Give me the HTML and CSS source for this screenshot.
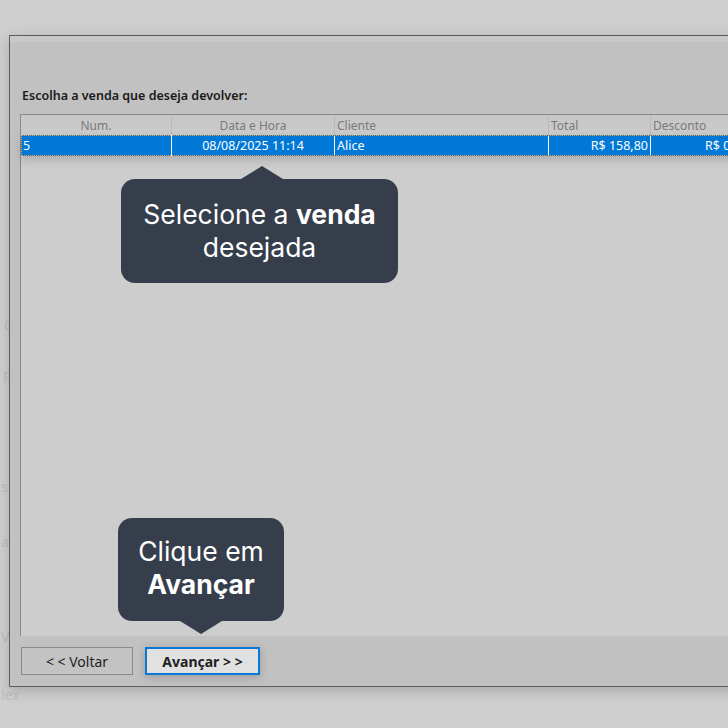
FILE: index.html
```html
<!DOCTYPE html>
<html lang="pt-BR">
<head>
    <meta charset="UTF-8">
    <meta name="viewport" content="width=device-width, initial-scale=1.0">
    <title>Devolução de venda</title>
    <link rel="stylesheet" href="styles.css">
</head>
<body>
    <div class="backdrop">
        <span class="bg-label bg-c">C</span>
        <span class="bg-label bg-p">P</span>
        <span class="bg-label bg-s">s</span>
        <span class="bg-label bg-sa">a</span>
        <span class="bg-label bg-ve">V</span>
        <span class="bg-label bg-lex">lex</span>
    </div>

    <div class="dialog">
        <div class="dialog-top"></div>
        <div class="dialog-body">
            <p class="prompt">Escolha a venda que deseja devolver:</p>
            <div class="grid">
                <div class="grid-head">
                    <div class="cell col-num center">Num.</div>
                    <div class="cell col-date center">Data e Hora</div>
                    <div class="cell col-client">Cliente</div>
                    <div class="cell col-total">Total</div>
                    <div class="cell col-disc">Desconto</div>
                </div>
                <div class="grid-row selected">
                    <div class="cell col-num">5</div>
                    <div class="cell col-date center">08/08/2025 11:14</div>
                    <div class="cell col-client">Alice</div>
                    <div class="cell col-total right">R$ 158,80</div>
                    <div class="cell col-disc right">R$ 0,00</div>
                </div>
            </div>
        </div>
        <div class="dialog-footer">
            <button class="btn btn-back">&lt; &lt; Voltar</button>
            <button class="btn btn-next">Avançar &gt; &gt;</button>
        </div>
    </div>

    <div class="tip tip-select">Selecione a <b>venda</b><br>desejada</div>
    <div class="tip tip-next">Clique em<br><b>Avançar</b></div>
</body>
</html>
```

FILE: styles.css
```css
html, body {
    margin: 0;
    height: 728px;
    overflow: hidden;
}

body {
    background-color: #cecece;
    font-family: "Noto Sans", "Open Sans", sans-serif;
    display: grid;
    grid-template-columns: 1fr;
    grid-template-rows: 1fr;
}

/* page behind the modal, mostly covered */
.backdrop {
    grid-area: 1 / 1;
    display: flex;
    flex-direction: column;
    align-items: flex-start;
    padding-left: 1px;
    color: #bdbdbd;
    font-size: 14px;
    line-height: 18px;
}

.bg-c { margin-top: 316px; margin-left: 3px; }
.bg-p { margin-top: 34px; margin-left: 2px; }
.bg-s { margin-top: 92px; }
.bg-sa { margin-top: 37px; }
.bg-ve { margin-top: 77px; }
.bg-lex { margin-top: 40px; }

.dialog {
    grid-area: 1 / 1;
    z-index: 1;
    margin: 35px 0 0 9px;
    width: 740px;
    height: 652px;
    box-sizing: border-box;
    border: 1px solid #5c5c5c;
    border-right: none;
    background-color: #c1c1c1;
    display: flex;
    flex-direction: column;
    box-shadow: 0 4px 12px rgba(0, 0, 0, 0.18);
}

.dialog-top {
    height: 6px;
    background-color: #c9c9c9;
}

.dialog-body {
    flex: 1;
    display: flex;
    flex-direction: column;
    padding-left: 10px;
}

.prompt {
    margin: 46px 0 10px 2px;
    font-size: 12.5px;
    line-height: 16px;
    font-weight: 600;
    color: #1a1a1a;
}

.grid {
    flex: 1;
    border-top: 1px solid #8a8a8a;
    border-left: 1px solid #8a8a8a;
    background-color: #cdcdcd;
    font-size: 12.5px;
}

.grid-head,
.grid-row {
    display: flex;
}

.grid-head {
    height: 20px;
    background: linear-gradient(#c6c6c6, #cbcbcb);
    color: #7a7a7a;
    font-size: 12px;
}

.grid-head .cell {
    border-right: 1px solid #b9b9b9;
}

.grid-row {
    height: 21px;
}

.grid-row.selected {
    background-color: #0078d7;
    color: #fff;
    outline: 1px dotted #f39a3a;
    outline-offset: -1px;
    box-shadow: 0 4px 9px rgba(0, 0, 0, 0.16);
    position: relative;
}

.grid-row .cell {
    border-right: 1px solid #fff;
}

.cell {
    flex: none;
    box-sizing: border-box;
    padding: 0 2px;
    display: flex;
    align-items: center;
    white-space: nowrap;
    overflow: hidden;
}

.cell.center { justify-content: center; }
.cell.right { justify-content: flex-end; }

.col-num { width: 151px; }
.col-date { width: 163px; }
.col-client { width: 214px; }
.col-total { width: 102px; }
.col-disc { width: 100px; }

.dialog-footer {
    height: 50px;
    box-sizing: border-box;
    padding: 11px 0 0 11px;
    display: flex;
    align-items: flex-start;
    gap: 12px;
}

.btn {
    height: 28px;
    box-sizing: border-box;
    font-family: "Noto Sans", "Open Sans", sans-serif;
    font-size: 14px;
    color: #1e1e1e;
    padding: 0;
}

.btn-back {
    width: 112px;
    border: 1px solid #8a8a8a;
    background-color: #c3c3c3;
}

.btn-next {
    width: 115px;
    border: 2px solid #0a78d7;
    background-color: #e1e1e1;
    font-weight: bold;
    box-shadow: 0 2px 9px rgba(0, 0, 0, 0.2);
}

/* coach-mark bubbles */
.tip {
    position: absolute;
    z-index: 2;
    box-sizing: border-box;
    background-color: #363e4c;
    color: #fff;
    border-radius: 14px;
    font-family: Inter, "Noto Sans", sans-serif;
    font-size: 26.5px;
    line-height: 33px;
    text-align: center;
}

.tip b {
    font-weight: 700;
}

.tip::before {
    content: "";
    position: absolute;
    left: 50%;
    margin-left: -21px;
    border-left: 21px solid transparent;
    border-right: 21px solid transparent;
}

.tip-select {
    left: 121px;
    top: 179px;
    width: 277px;
    height: 104px;
    padding-top: 19px;
}

.tip-select::before {
    top: -13px;
    margin-left: -19px;
    border-bottom: 13px solid #363e4c;
}

.tip-next {
    left: 118px;
    top: 518px;
    width: 166px;
    height: 103px;
    padding-top: 17px;
}

.tip-next::before {
    bottom: -13px;
    border-top: 13px solid #363e4c;
}
```
